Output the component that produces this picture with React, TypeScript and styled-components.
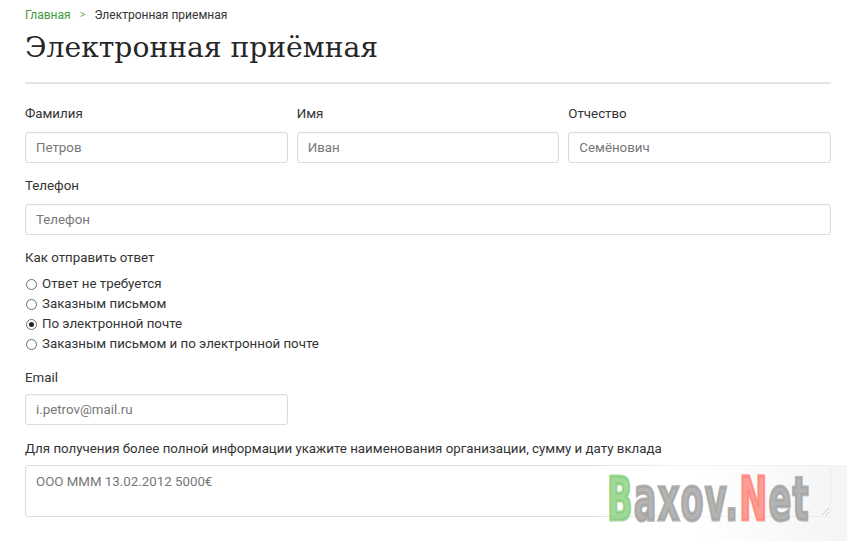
import React from "react";
import styled, { createGlobalStyle } from "styled-components";

const GlobalStyle = createGlobalStyle`
  html, body {
    margin: 0;
    padding: 0;
    background: #ffffff;
  }
  body {
    font-family: Roboto, "Noto Sans", sans-serif;
    color: #333333;
  }
  * {
    box-sizing: border-box;
  }
`;

const Page = styled.div`
  position: relative;
  width: 847px;
  height: 541px;
  overflow: hidden;
  padding: 6px 16px 0 25px;
`;

const Breadcrumbs = styled.div`
  display: flex;
  align-items: center;
  gap: 9px;
  font-size: 12px;
  line-height: 18px;
  color: #333333;
`;

const CrumbLink = styled.a`
  color: #3f9a3a;
  text-decoration: none;
`;

const CrumbSep = styled.span`
  color: #6aa763;
  font-size: 11px;
`;

const Title = styled.h1`
  margin: 6px 0 0;
  font-family: "DejaVu Serif", serif;
  font-weight: 400;
  font-size: 28.2px;
  line-height: 36px;
  color: #262626;
`;

const Divider = styled.hr`
  margin: 16px 0 0;
  border: 0;
  height: 2px;
  background: #e4e4e4;
`;

const Form = styled.form`
  display: flex;
  flex-direction: column;
  padding-top: 21px;
`;

const Row = styled.div`
  display: grid;
  grid-template-columns: repeat(3, 1fr);
  column-gap: 9px;
`;

const Field = styled.div<{ $width?: number }>`
  display: flex;
  flex-direction: column;
  margin-bottom: ${(p) => (p.$width ? 15 : 14)}px;
  width: ${(p) => (p.$width ? `${p.$width}px` : "auto")};
`;

const Label = styled.label<{ $tight?: boolean }>`
  font-size: 13.3px;
  line-height: 18px;
  color: #333333;
  margin-bottom: ${(p) => (p.$tight ? 7 : 9)}px;
`;

const Input = styled.input`
  height: 31px;
  padding: 0 10px;
  border: 1px solid #dcdcdc;
  border-radius: 3px;
  font-family: Roboto, "Noto Sans", sans-serif;
  font-size: 13.3px;
  color: #666666;
  background: #ffffff;
  box-shadow: inset 0 1px 2px rgba(0, 0, 0, 0.04);
  &::placeholder {
    color: #777777;
  }
`;

const TextArea = styled.textarea`
  height: 52px;
  padding: 7px 10px;
  border: 1px solid #dcdcdc;
  border-radius: 3px;
  font-family: Roboto, "Noto Sans", sans-serif;
  font-size: 13.3px;
  line-height: 17px;
  color: #666666;
  background: #ffffff;
  &::placeholder {
    color: #777777;
  }
`;

const RadioGroup = styled.fieldset`
  border: 0;
  margin: 0 0 15px;
  padding: 0;
  display: flex;
  flex-direction: column;
`;

const Legend = styled.div`
  font-size: 13.3px;
  line-height: 18px;
  margin-bottom: 7px;
`;

const RadioRow = styled.label`
  display: flex;
  align-items: center;
  gap: 5px;
  font-size: 13.3px;
  line-height: 20px;
  color: #333333;
`;

const RadioMark = styled.span<{ $checked?: boolean }>`
  position: relative;
  width: 11px;
  height: 11px;
  margin-left: 1px;
  border: 1px solid #6e6e6e;
  border-radius: 50%;
  background: #ffffff;
  &::after {
    content: "";
    display: ${(p) => (p.$checked ? "block" : "none")};
    position: absolute;
    left: 2px;
    top: 2px;
    width: 5px;
    height: 5px;
    border-radius: 50%;
    background: #222222;
  }
`;

const Watermark = styled.div`
  position: absolute;
  right: 0;
  bottom: 0;
  width: 252px;
  height: 76px;
  background: linear-gradient(90deg, rgba(255, 255, 255, 0.2), rgba(255, 255, 255, 0.75) 40%, rgba(240, 240, 240, 0.7));
  pointer-events: none;
`;

const MarkText = styled.div`
  position: absolute;
  left: 12px;
  top: 4px;
  font-family: "DejaVu Sans", sans-serif;
  font-weight: 700;
  font-size: 56px;
  line-height: 56px;
  letter-spacing: 2px;
  transform: scale(0.6, 1.08);
  transform-origin: left top;
  white-space: nowrap;
  color: rgba(160, 160, 160, 0.8);
  -webkit-text-stroke: 3px rgba(160, 160, 160, 0.8);
`;

const MarkLetter = styled.span<{ $color: string }>`
  color: ${(p) => p.$color};
  -webkit-text-stroke: 3px ${(p) => p.$color};
`;

const options = [
  "Ответ не требуется",
  "Заказным письмом",
  "По электронной почте",
  "Заказным письмом и по электронной почте",
];

export default function App() {
  return (
    <>
      <GlobalStyle />
      <Page>
        <Breadcrumbs>
          <CrumbLink href="#">Главная</CrumbLink>
          <CrumbSep>&gt;</CrumbSep>
          <span>Электронная приемная</span>
        </Breadcrumbs>
        <Title>Электронная приёмная</Title>
        <Divider />
        <Form>
          <Row>
            <Field>
              <Label>Фамилия</Label>
              <Input placeholder="Петров" />
            </Field>
            <Field>
              <Label>Имя</Label>
              <Input placeholder="Иван" />
            </Field>
            <Field>
              <Label>Отчество</Label>
              <Input placeholder="Семёнович" />
            </Field>
          </Row>
          <Field>
            <Label>Телефон</Label>
            <Input placeholder="Телефон" />
          </Field>
          <RadioGroup>
            <Legend>Как отправить ответ</Legend>
            {options.map((o, i) => (
              <RadioRow key={o}>
                <RadioMark $checked={i === 2} />
                {o}
              </RadioRow>
            ))}
          </RadioGroup>
          <Field $width={263}>
            <Label $tight>Email</Label>
            <Input placeholder="i.petrov@mail.ru" />
          </Field>
          <Field>
            <Label $tight>
              Для получения более полной информации укажите наименования организации, сумму и дату вклада
            </Label>
            <TextArea placeholder="ООО МММ 13.02.2012 5000€" />
          </Field>
        </Form>
        <Watermark>
          <MarkText>
            <MarkLetter $color="rgba(130, 205, 120, 0.75)">B</MarkLetter>
            axov.
            <MarkLetter $color="rgba(255, 125, 115, 0.75)">N</MarkLetter>
            et
          </MarkText>
        </Watermark>
      </Page>
    </>
  );
}
